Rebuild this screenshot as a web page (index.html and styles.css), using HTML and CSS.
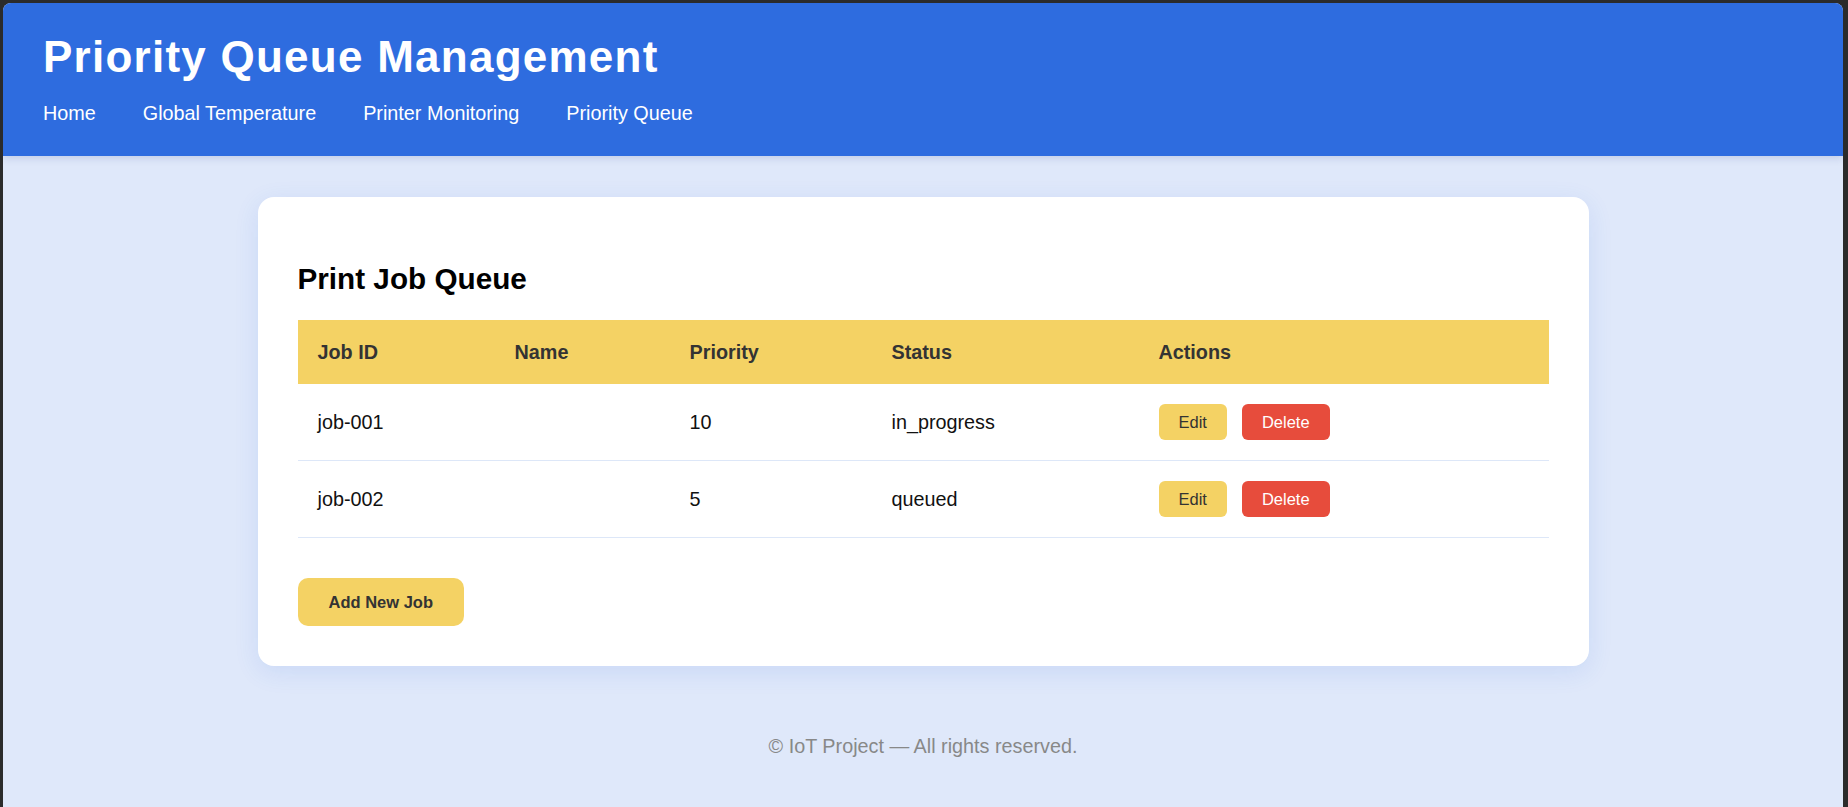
FILE: index.html
```html
<!DOCTYPE html>
<html lang="en">
<head>
<meta charset="utf-8">
<title>Priority Queue Management</title>
<link rel="stylesheet" href="styles.css">
</head>
<body>
<div class="app">
  <header class="site-header">
    <h1 class="site-title">Priority Queue Management</h1>
    <nav class="site-nav">
      <a href="#">Home</a>
      <a href="#">Global Temperature</a>
      <a href="#">Printer Monitoring</a>
      <a href="#">Priority Queue</a>
    </nav>
  </header>
  <main class="main">
    <section class="card">
      <h2 class="card-title">Print Job Queue</h2>
      <table class="jobs">
        <colgroup>
          <col class="c-id"><col class="c-name"><col class="c-prio"><col class="c-status"><col class="c-actions">
        </colgroup>
        <thead>
          <tr><th>Job ID</th><th>Name</th><th>Priority</th><th>Status</th><th>Actions</th></tr>
        </thead>
        <tbody>
          <tr>
            <td>job-001</td><td></td><td>10</td><td>in_progress</td>
            <td><div class="actions"><button class="btn btn-edit">Edit</button><button class="btn btn-delete">Delete</button></div></td>
          </tr>
          <tr>
            <td>job-002</td><td></td><td>5</td><td>queued</td>
            <td><div class="actions"><button class="btn btn-edit">Edit</button><button class="btn btn-delete">Delete</button></div></td>
          </tr>
        </tbody>
      </table>
      <button class="btn-add">Add New Job</button>
    </section>
  </main>
  <footer class="site-footer">© IoT Project — All rights reserved.</footer>
</div>
</body>
</html>
```
FILE: styles.css
```css
* { box-sizing: border-box; }
html, body { margin: 0; padding: 0; }
body {
  background: #2b2b2b;
  font-family: "Liberation Sans", Arial, sans-serif;
  font-size: 19.8px;
  color: #111;
  height: 807px;
  overflow: hidden;
}
.app {
  margin: 3px 5px 0 3px;
  background: #dfe8fa;
  border-radius: 8px 8px 0 0;
  overflow: hidden;
  min-height: 804px;
}
.site-header {
  background: #2e6cdf;
  color: #fff;
  padding: 29px 40px 31px;
  box-shadow: 0 2px 8px rgba(20, 50, 120, 0.15);
  position: relative;
}
.site-title {
  margin: 0 0 20px;
  font-size: 44px;
  font-weight: bold;
  letter-spacing: 1.25px;
  line-height: normal;
}
.site-nav {
  display: flex;
  gap: 47px;
}
.site-nav a {
  color: #fff;
  text-decoration: none;
  font-size: 19.8px;
}
.main {
  padding: 41px 0 34px;
}
.card {
  width: 1331px;
  margin: 0 auto;
  background: #fff;
  border-radius: 16px;
  padding: 40px;
  box-shadow: 0 6px 24px rgba(46, 108, 223, 0.12);
}
.card-title {
  margin: 24.6px 0;
  font-size: 29.7px;
  font-weight: bold;
  color: #000;
}
.jobs {
  width: 100%;
  border-collapse: collapse;
  table-layout: fixed;
}
.c-id { width: 197px; }
.c-name { width: 175px; }
.c-prio { width: 202px; }
.c-status { width: 267px; }
.jobs th {
  background: #f4d264;
  color: #333;
  text-align: left;
  font-weight: bold;
  padding: 20.5px 20px;
  font-size: 19.8px;
}
.jobs td {
  padding: 20px 20px;
  border-bottom: 1px solid #dde7f8;
  color: #111;
  font-size: 19.8px;
  vertical-align: middle;
}
.actions {
  display: flex;
  gap: 15px;
}
.btn {
  font-family: "Liberation Sans", Arial, sans-serif;
  font-size: 16.5px;
  line-height: 19px;
  padding: 8.5px 20px;
  border: none;
  border-radius: 6px;
}
.btn-edit { background: #f4d264; color: #333; }
.btn-delete { background: #e74c3c; color: #fff; }
.btn-add {
  display: block;
  margin-top: 40px;
  font-family: "Liberation Sans", Arial, sans-serif;
  font-size: 16.5px;
  font-weight: bold;
  line-height: 19px;
  padding: 14.5px 31px;
  border: none;
  border-radius: 10px;
  background: #f4d264;
  color: #333;
}
.site-footer {
  text-align: center;
  color: #888;
  font-size: 19.8px;
  padding: 35px 0;
}
```
